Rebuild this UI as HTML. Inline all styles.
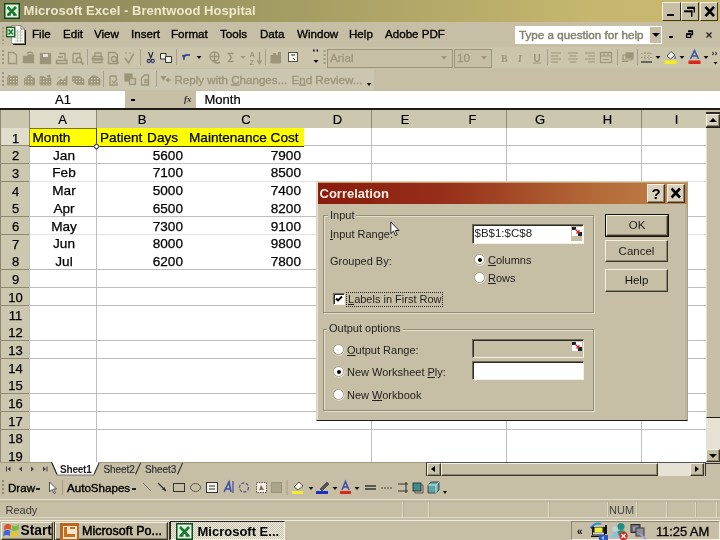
<!DOCTYPE html>
<html>
<head>
<meta charset="utf-8">
<title>Microsoft Excel - Brentwood Hospital</title>
<style>
html,body{margin:0;padding:0;}
html{background:#c7bfa5;}
body{width:720px;height:540px;overflow:hidden;position:relative;filter:blur(0.4px);background:#c7bfa5;font-family:"Liberation Sans",sans-serif;color:#000;}
.abs{position:absolute;}
.t{position:absolute;white-space:nowrap;line-height:1;}
#titlebar{left:0;top:0;width:720px;height:22px;background:linear-gradient(to right,#8a855b 0%,#a59e64 42%,#c6b66e 82%,#c9b96f 100%);}
#title{left:23.5px;top:4px;font-size:13px;font-weight:bold;color:#efe8cc;letter-spacing:0.05px;}
.wbtn{position:absolute;top:1.5px;width:18.5px;height:19px;background:#c7bfa5;border:1px solid;border-color:#f4f0e0 #3a3628 #3a3628 #f4f0e0;box-sizing:border-box;}
#menubar{left:0;top:22px;width:720px;height:24px;background:#c7bfa5;}
.menu{top:28px;font-size:11.6px;-webkit-text-stroke:0.35px #000;}
#tb1{left:0;top:47px;width:720px;height:21px;background:#cbc5ac;}
#tb2{left:0;top:69px;width:373.500px;height:21px;background:#cbc6af;}
#fbar{left:0;top:90px;width:720px;height:18px;background:#c7bfa5;}
#sheet{left:0;top:108px;width:720px;height:354px;background:#fff;overflow:hidden;}
.hl{position:absolute;left:29px;width:677px;height:1px;background:#bebebe;}
.vl{position:absolute;top:20px;width:1px;height:340px;background:#bebebe;}
.rh{position:absolute;left:1px;width:29px;text-align:center;font-size:13px;line-height:1;-webkit-text-stroke:0.25px #000;margin-top:0.5px;}
.ch{position:absolute;top:4.5px;font-size:13px;line-height:1;text-align:center;-webkit-text-stroke:0.2px #000;}
.c{position:absolute;font-size:13.6px;line-height:1;white-space:nowrap;-webkit-text-stroke:0.25px #000;}
.dl{position:absolute;font-size:11px;line-height:1;white-space:nowrap;color:#222;}
.grp{position:absolute;border:1px solid #948e76;box-shadow:1px 1px 0 #e2decb, inset 1px 1px 0 #e2decb;}
.btn{position:absolute;box-sizing:border-box;background:#c7bfa5;border:1px solid;border-color:#f4f0e0 #3a3628 #3a3628 #f4f0e0;box-shadow:inset -1px -1px 0 #8e8872;font-size:11.5px;text-align:center;}
.radio{position:absolute;width:11px;height:11px;border-radius:50%;background:#fff;border:1px solid #a29c86;box-shadow:0.5px 0.5px 0 #f4f0e0;box-sizing:border-box;}
.radio.on::after{content:"";position:absolute;left:2.5px;top:2.5px;width:4px;height:4px;border-radius:50%;background:#000;}
</style>
</head>
<body>

<!-- title bar -->
<div id="titlebar" class="abs"></div>
<svg class="abs" style="left:4px;top:3px" width="16" height="16" viewBox="0 0 16 16">
  <rect x="0.750" y="0.750" width="14.500" height="14.500" fill="#def3da" stroke="#0d4a1c" stroke-width="1.500"/>
  <path d="M3.500 4 L11.500 12 M12 4 L4 12" stroke="#1a7a32" stroke-width="2.600"/>
  <path d="M3 12 H7 M9 12 H13" stroke="#0d4a1c" stroke-width="1.200"/>
</svg>
<div id="title" class="t">Microsoft Excel - Brentwood Hospital</div>
<div class="wbtn" style="left:662px"><div class="abs" style="left:4px;top:11px;width:7px;height:2px;background:#000"></div></div>
<div class="wbtn" style="left:680.5px">
  <svg class="abs" style="left:0;top:0" width="17" height="17" viewBox="0 0 17 17"><path d="M5 4.800 H13" stroke="#000" stroke-width="2.200"/><path d="M12.300 4.800 V9.500" stroke="#000" stroke-width="1.400"/><path d="M2 8.300 H10.500" stroke="#000" stroke-width="2"/><path d="M9.800 8.300 V14" stroke="#000" stroke-width="1.400"/></svg>
</div>
<div class="wbtn" style="left:699.5px">
  <svg class="abs" style="left:0;top:0" width="17" height="17" viewBox="0 0 17 17"><path d="M4.500 3.800 L13 13.200 M13 3.800 L4.500 13.200" stroke="#000" stroke-width="2.600"/></svg>
</div>

<!-- menu bar -->
<div id="menubar" class="abs"></div>

<svg class="abs" style="left:5px;top:24px" width="22" height="22" viewBox="0 0 22 22">
  <path d="M8 3 H17 L21 6.500 V21 H8 Z" fill="#111"/>
  <path d="M6.500 1.500 H16 L19.500 5 V19.500 H6.500 Z" fill="#fbfbf4" stroke="#8a8776" stroke-width="0.800"/>
  <path d="M16 1.500 V5 H19.500" fill="none" stroke="#555" stroke-width="0.800"/>
  <path d="M10 8 H18 M10 11 H18 M10 14 H18 M10 17 H18 M12.500 6 V18 M15.500 6 V18" stroke="#b9cbb8" stroke-width="1"/>
  <rect x="1.750" y="3.250" width="8" height="9.500" fill="#d9f0d6" stroke="#14501f" stroke-width="1.300"/>
  <path d="M3.500 5.500 L8 10.500 M8 5.500 L3.500 10.500" stroke="#1a7a32" stroke-width="1.600"/>
  <path d="M1 3 V14" stroke="#a19a80" stroke-width="1.600" stroke-dasharray="1.500 1.500" transform="translate(-3.500,0)"/>
</svg>
<div class="abs" style="left:1.5px;top:27px;width:2px;height:17px;background:repeating-linear-gradient(to bottom,#a39c82 0 2px,transparent 2px 4px)"></div>
<div class="t menu" style="left:32px">File</div>
<div class="t menu" style="left:63px">Edit</div>
<div class="t menu" style="left:94px">View</div>
<div class="t menu" style="left:131px">Insert</div>
<div class="t menu" style="left:171px">Format</div>
<div class="t menu" style="left:220px">Tools</div>
<div class="t menu" style="left:260px">Data</div>
<div class="t menu" style="left:297px">Window</div>
<div class="t menu" style="left:349px">Help</div>
<div class="t menu" style="left:385px">Adobe PDF</div>
<div class="abs" style="left:515px;top:26px;width:146.500px;height:17.500px;background:#fff;"></div>
<div class="t" style="left:519px;top:29px;font-size:11.6px;color:#85816f;-webkit-text-stroke:0.45px #85816f;letter-spacing:0.03px">Type a question for help</div>
<div class="abs" style="left:650px;top:27px;width:10.500px;height:15.500px;background:#c7bfa5;"></div>
<div class="abs" style="left:651.500px;top:33px;width:0;height:0;border-left:4px solid transparent;border-right:4px solid transparent;border-top:4px solid #000;"></div>
<div class="abs" style="left:669px;top:36px;width:4px;height:2px;background:#000;"></div>
<svg class="abs" style="left:685px;top:30px" width="9" height="9" viewBox="0 0 9 9">
  <path d="M3.500 1.500 H7.500 V4.500 H6" fill="none" stroke="#000" stroke-width="1.300"/><path d="M3 1.200 H8" stroke="#000" stroke-width="1.800"/>
  <rect x="1.600" y="4.200" width="4" height="3.200" fill="none" stroke="#000" stroke-width="1.300"/><path d="M1 4 H6.300" stroke="#000" stroke-width="1.800"/>
</svg>
<svg class="abs" style="left:704px;top:30px" width="10" height="10" viewBox="0 0 10 10"><path d="M2.500 2.500 L7.500 7.500 M7.500 2.500 L2.500 7.500" stroke="#222" stroke-width="1.300"/></svg>
<div id="tb1" class="abs"></div>
<svg class="abs" style="left:0;top:46px" width="720" height="22" viewBox="0 0 720 22">
 <g fill="none" stroke="#9c9579" stroke-width="1.300">
  <path d="M3 4 V18" stroke-dasharray="2 2" stroke-width="2"/>
  <path d="M8.500 6.500 H13.500 L16.500 9 V17.500 H8.500 Z"/>
  <path d="M23.500 16.500 V10.500 H27 L28.500 9 H33.500 V16.500 Z" fill="#9c9579"/><path d="M27 7.500 Q30 5 33 7.500"/>
  <rect x="40.500" y="7.500" width="10" height="10" fill="#9c9579"/><rect x="43" y="8" width="5" height="3" fill="#e4e0cf" stroke="none"/>
  <path d="M59 7.500 H65 V14 M56.500 14.500 H67 V17.500 H56.500 Z M58 11 H63"/>
  <path d="M73 7.500 H80 V13 M73 7.500 V16.500 H77"/><circle cx="79" cy="14" r="2.500"/><path d="M81 16 L83.500 18.500" stroke-width="1.800"/>
  <path d="M87.500 3 V19" stroke-width="1" stroke="#a8a189"/>
  <path d="M93 10.500 H102 V16.500 H93 Z M95 10 V7 H101 V10 M91.500 13 H103.500" /><path d="M94 13.500 H102" stroke-width="2"/>
  <path d="M108.500 6.500 H115 L117.500 9 V17.500 H108.500 Z"/><circle cx="114" cy="13" r="2.500"/><path d="M116 15 L118.500 17.500" stroke-width="1.600"/>
  <path d="M125 12 L128.500 17 L133.500 8" stroke-width="1.600"/><path d="M125 7 h2 m2 0 h2 m2 0 h1" stroke-width="1.200"/>
  <path d="M140.500 3 V19" stroke-width="1" stroke="#a8a189"/>
 </g>
 <g fill="none" stroke="#2b2f6a" stroke-width="1.300">
  <path d="M148.500 6 L151 12.500 M153 6 L150.500 12.500" stroke="#222" stroke-width="1.100"/><circle cx="148.800" cy="15" r="1.600" stroke-width="1.100"/><circle cx="152.700" cy="15" r="1.600" stroke-width="1.100"/>
  <path d="M160.500 7.500 H166 V13 H160.500 Z" fill="#f4f2e8" stroke="#333" stroke-width="1"/><path d="M165.500 10.500 H171.500 V16.500 H165.500 Z" fill="#f4f2e8" stroke="#333" stroke-width="1"/>
 </g>
 <path d="M176.500 3 V19" stroke="#a8a189"/>
 <path d="M184 14 Q183 8 190 9" fill="none" stroke="#3a3f9a" stroke-width="1.600"/><path d="M182 9 L186.500 8.500 L183.500 13 Z" fill="#3a3f9a"/>
 <path d="M196.500 10 h5 l-2.500 3 z" fill="#111"/>
 <g fill="none" stroke="#9c9579" stroke-width="1.300">
  <circle cx="214.500" cy="10.500" r="4.500"/><path d="M210 10.500 H219 M214.500 6 V15"/><path d="M213 14 Q216 19 220 16" stroke-width="1.800"/>
  <path d="M233.500 7.500 H228.500 L231.500 11.500 L228.500 15.500 H233.500"/>
  <path d="M240.500 10 h5 l-2.500 3 z" fill="#9c9579" stroke="none"/>
  <path d="M259.500 6 V17 M257.500 14.500 L259.500 17.500 L261.500 14.500" />
 </g>
 <text x="249.500" y="10.500" font-size="7.500" font-family="Liberation Sans" font-weight="bold" fill="#9c9579">A</text>
 <text x="249.500" y="18.500" font-size="7.500" font-family="Liberation Sans" font-weight="bold" fill="#9c9579">Z</text>
 <path d="M265.500 3 V19" stroke="#a8a189"/>
 <path d="M270.500 17.500 V9 H273 V7 H276 V9 H278 V6 H281 V17.500 Z" fill="#9c9579"/>
 <rect x="288.500" y="6.500" width="9" height="9" fill="#f6f4ea" stroke="#55524a"/><path d="M291 9 h4 M293 12 l2 2" stroke="#333" stroke-width="1"/>
 <path d="M313 4.500 h1.600 M316.500 4.500 h1.600" stroke="#111" stroke-width="2"/><path d="M313.500 14 h5 l-2.500 3 z" fill="#111"/>
 <path d="M324.500 4 V18" stroke="#9c9579" stroke-dasharray="2 2" stroke-width="2"/>
 <rect x="327.500" y="3.500" width="125" height="18" fill="#c7bfa5" stroke="#9c9579"/>
 <path d="M441 10 h6 l-3 3.500 z" fill="#9c9579"/>
 <rect x="454.500" y="3.500" width="37" height="18" fill="#c7bfa5" stroke="#9c9579"/>
 <path d="M481 10 h6 l-3 3.500 z" fill="#9c9579"/>
 <text x="330" y="16" font-size="11.800" font-family="Liberation Sans" fill="#9c9579" stroke="#9c9579" stroke-width="0.300">Arial</text>
 <text x="457" y="16" font-size="11.800" font-family="Liberation Sans" fill="#9c9579" stroke="#9c9579" stroke-width="0.300">10</text>
 <text x="501" y="15.500" font-size="10" font-family="Liberation Serif" font-weight="bold" fill="#9c9579">B</text>
 <text x="518" y="15.500" font-size="10" font-family="Liberation Serif" font-weight="bold" font-style="italic" fill="#9c9579">I</text>
 <text x="533.500" y="15.500" font-size="10" font-family="Liberation Sans" font-weight="bold" fill="#9c9579">U</text>
 <path d="M533 17 h8" stroke="#9c9579"/>
 <path d="M547.500 3 V19 M617.500 3 V19 M637.500 3 V19" stroke="#a8a189"/>
 <g stroke="#9c9579" stroke-width="1.200" fill="none">
  <path d="M551 7 h10 M551 10 h7 M551 13 h10 M551 16 h7"/>
  <path d="M568 7 h10 M569.500 10 h7 M568 13 h10 M569.500 16 h7"/>
  <path d="M585 7 h10 M588 10 h7 M585 13 h10 M588 16 h7"/>
  <rect x="600.500" y="6.500" width="11" height="10"/><path d="M600.500 10 h11 M604 6.500 v3.500 M608 6.500 v3.500 M603 13.500 h6"/>
  <path d="M623 9 h9 v5 h-9 z M622 15.500 h6" /><rect x="626" y="7" width="7" height="5" fill="#9c9579"/>
  <path d="M641 7.500 h11 M641 11.500 h11 M645 6 v8 M649 6 v8" stroke-dasharray="1.500 1.500" stroke-width="1"/>
 </g>
 <path d="M641 16 h11" stroke="#444" stroke-width="1.500"/>
 <path d="M655.500 10 h5 l-2.500 3 z M679.500 10 h5 l-2.500 3 z M703.500 10 h5 l-2.500 3 z" fill="#111"/>
 <path d="M667 10 L671 5.500 L675 9 L670.500 13 Z" fill="#f4f2e6" stroke="#444" stroke-width="0.900"/><path d="M674 9 q2 1 1 4" stroke="#35a" fill="none"/>
 <rect x="664.500" y="14.500" width="12" height="3.500" fill="#f4ee20"/>
 <path d="M690.500 13 L694.500 4.500 L698.500 13 M692 10 H697" stroke="#3b4fa8" stroke-width="1.500" fill="none"/>
 <rect x="688.500" y="14.500" width="12" height="3.500" fill="#dc241c"/>
 <path d="M712 6 l2 1.500 l-2 1.500 M715 6 l2 1.500 l-2 1.500" stroke="#111" fill="none" stroke-width="0.900"/><path d="M713.500 16 h4 l-2 2.500 z" fill="#111"/>
</svg>
<div id="tb2" class="abs"></div>
<svg class="abs" style="left:0;top:68px" width="720" height="22" viewBox="0 0 720 22">
 <path d="M3 4 V18" stroke="#9c9579" stroke-dasharray="2 2" stroke-width="2" fill="none"/>
 <defs><pattern id="spk" width="3" height="3" patternUnits="userSpaceOnUse"><rect width="3" height="3" fill="#9c9579"/><rect x="1" y="1" width="1.300" height="1.300" fill="#d8d3bd"/></pattern></defs>
 <g fill="url(#spk)" stroke="#9c9579" stroke-width="0.800">
  <path d="M7.500 9 l2 -2 l2 2 l1.500 -1 h4.500 v9 h-10 z"/>
  <path d="M24.500 10 h2 l1.500 -2.500 h3 l1 2.500 h2.500 v7 h-10 z"/>
  <path d="M40 8.500 h4 l2 2 h5 v6.500 h-11 z"/><path d="M47 8 l3 -1 v3 z" fill="#9c9579"/>
  <path d="M57 17 v-2 l4 -4 l2 2 l4 -5 v9 z"/><path d="M57.500 9 h3" />
  <path d="M72.500 8.500 h7 l4.500 3 v5 h-7 l-4.500 -3 z"/>
  <path d="M88.500 11.500 l3.500 -3.500 h4 l4 3 v6 h-11.500 z"/>
 </g>
 <path d="M103.500 3 V19 M156.500 3 V19" stroke="#a8a189"/>
 <g fill="none" stroke="#9c9579" stroke-width="1.300">
  <path d="M110 8 h6 v3 M110 8 v9 h7 v-3 M112 13 l2 2 l3 -4"/>
  <rect x="125" y="6" width="7" height="7" fill="#9c9579"/><rect x="129.500" y="10.500" width="6" height="6" fill="#c7bfa5"/>
  <path d="M141.500 17 v-7 l3 -3 h4 v10 z M144 12 h5 M144 14.500 h5"/>
 </g>
 <path d="M160.500 8 h6 l-3 5 z" fill="#9c9579"/><path d="M166 12 l2.500 -2 v4 z M168 12 h3" fill="#9c9579" stroke="#9c9579"/>
 <text x="174.500" y="15.500" font-size="11.600" font-family="Liberation Sans" fill="#9c9579" stroke="#9c9579" stroke-width="0.350">Reply with <tspan text-decoration="underline">C</tspan>hanges...</text>
 <text x="291.500" y="15.500" font-size="11.600" font-family="Liberation Sans" fill="#9c9579" stroke="#9c9579" stroke-width="0.350">E<tspan text-decoration="underline">n</tspan>d Review...</text>
 <path d="M366.500 15 h5 l-2.500 3 z" fill="#111"/>
</svg>
<div id="fbar" class="abs"></div>
<div class="abs" style="left:0;top:91px;width:125px;height:17px;background:#fff"></div>
<div class="t" style="left:55px;top:92.5px;font-size:13px;-webkit-text-stroke:0.2px #000">A1</div>
<div class="abs" style="left:131px;top:99px;width:4px;height:2px;background:#000"></div>
<div class="t" style="left:184px;top:95px;font-size:9px;font-style:italic;font-weight:bold;color:#333;font-family:'Liberation Serif',serif">fx</div>
<div class="abs" style="left:196px;top:91px;width:524px;height:17px;background:#fff"></div>
<div class="t" style="left:204.5px;top:92.5px;font-size:13px;-webkit-text-stroke:0.2px #000">Month</div>

<div id="sheet" class="abs">
<div class="abs" style="left:0;top:0.400px;width:720px;height:1.500px;background:#1e1c16"></div>
<div class="abs" style="left:0;top:2px;width:706px;height:18px;background:#ccc7af"></div>
<div class="abs" style="left:0;top:2px;width:29px;height:360px;background:#ccc7af"></div>
<div class="abs" style="left:30px;top:2px;width:66px;height:18px;background:#e0ddcc"></div>
<div class="abs" style="left:0;top:20px;width:29px;height:18px;background:#e0ddcc"></div>
<div class="vl" style="left:29px"></div>
<div class="vl" style="left:96px"></div>
<div class="vl" style="left:371px"></div>
<div class="vl" style="left:506px"></div>
<div class="vl" style="left:641px"></div>
<div class="vl" style="left:706px"></div>
<div class="abs" style="left:29px;top:2px;width:1px;height:18px;background:#8e8872"></div>
<div class="abs" style="left:96px;top:2px;width:1px;height:18px;background:#8e8872"></div>
<div class="abs" style="left:371px;top:2px;width:1px;height:18px;background:#8e8872"></div>
<div class="abs" style="left:506px;top:2px;width:1px;height:18px;background:#8e8872"></div>
<div class="abs" style="left:641px;top:2px;width:1px;height:18px;background:#8e8872"></div>
<div class="ch" style="left:29px;width:67px">A</div>
<div class="ch" style="left:96px;width:92px">B</div>
<div class="ch" style="left:188px;width:116px">C</div>
<div class="ch" style="left:304px;width:67px">D</div>
<div class="ch" style="left:371px;width:68px">E</div>
<div class="ch" style="left:439px;width:67px">F</div>
<div class="ch" style="left:506px;width:68px">G</div>
<div class="ch" style="left:574px;width:67px">H</div>
<div class="ch" style="left:644px;width:65px">I</div>
<div class="hl" style="top:37.4px"></div>
<div class="abs" style="left:0;top:37.4px;width:29px;height:1px;background:#8e8872"></div>
<div class="rh" style="top:23.0px">1</div>
<div class="hl" style="top:55.1px"></div>
<div class="abs" style="left:0;top:55.1px;width:29px;height:1px;background:#8e8872"></div>
<div class="rh" style="top:40.7px">2</div>
<div class="hl" style="top:72.8px;opacity:0.45"></div>
<div class="abs" style="left:0;top:72.8px;width:29px;height:1px;background:#8e8872"></div>
<div class="rh" style="top:58.4px">3</div>
<div class="rh" style="top:76.1px">4</div>
<div class="hl" style="top:108.2px"></div>
<div class="abs" style="left:0;top:108.2px;width:29px;height:1px;background:#8e8872"></div>
<div class="rh" style="top:93.8px">5</div>
<div class="hl" style="top:125.9px;opacity:0.45"></div>
<div class="abs" style="left:0;top:125.9px;width:29px;height:1px;background:#8e8872"></div>
<div class="rh" style="top:111.5px">6</div>
<div class="rh" style="top:129.2px">7</div>
<div class="hl" style="top:161.3px"></div>
<div class="abs" style="left:0;top:161.3px;width:29px;height:1px;background:#8e8872"></div>
<div class="rh" style="top:146.9px">8</div>
<div class="hl" style="top:179.0px"></div>
<div class="abs" style="left:0;top:179.0px;width:29px;height:1px;background:#8e8872"></div>
<div class="rh" style="top:164.6px">9</div>
<div class="hl" style="top:196.7px"></div>
<div class="abs" style="left:0;top:196.7px;width:29px;height:1px;background:#8e8872"></div>
<div class="rh" style="top:182.3px">10</div>
<div class="rh" style="top:200.0px">11</div>
<div class="hl" style="top:232.1px"></div>
<div class="abs" style="left:0;top:232.1px;width:29px;height:1px;background:#8e8872"></div>
<div class="rh" style="top:217.7px">12</div>
<div class="hl" style="top:249.8px"></div>
<div class="abs" style="left:0;top:249.8px;width:29px;height:1px;background:#8e8872"></div>
<div class="rh" style="top:235.4px">13</div>
<div class="rh" style="top:253.1px">14</div>
<div class="hl" style="top:285.2px"></div>
<div class="abs" style="left:0;top:285.2px;width:29px;height:1px;background:#8e8872"></div>
<div class="rh" style="top:270.8px">15</div>
<div class="hl" style="top:302.9px"></div>
<div class="abs" style="left:0;top:302.9px;width:29px;height:1px;background:#8e8872"></div>
<div class="rh" style="top:288.5px">16</div>
<div class="hl" style="top:320.6px"></div>
<div class="abs" style="left:0;top:320.6px;width:29px;height:1px;background:#8e8872"></div>
<div class="rh" style="top:306.2px">17</div>
<div class="rh" style="top:323.9px">18</div>
<div class="hl" style="top:356.0px"></div>
<div class="abs" style="left:0;top:356.0px;width:29px;height:1px;background:#8e8872"></div>
<div class="rh" style="top:341.6px">19</div>
<div class="abs" style="left:30px;top:20px;width:274px;height:18px;background:#ffff00"></div>
<div class="abs" style="left:96px;top:37.700px;width:208px;height:1px;background:#3a3a20"></div>
<div class="abs" style="left:29px;top:20px;width:68px;height:18.500px;border:1px solid #3a3a20;border-top-color:#77752a;border-left-color:#8c8a4a;box-sizing:border-box"></div>
<div class="abs" style="left:94px;top:36px;width:3px;height:3px;background:#fff;border:1px solid #333;box-sizing:content-box;transform:rotate(45deg)"></div>
<div class="c" style="left:32.500px;top:23.2px">Month</div>
<div class="c" style="left:100px;top:23.2px;word-spacing:1px">Patient Days</div>
<div class="c" style="left:189px;top:23.2px">Maintenance Cost</div>
<div class="c" style="left:31px;width:66px;text-align:center;top:40.7px">Jan</div>
<div class="c" style="left:96px;width:87px;text-align:right;top:40.7px">5600</div>
<div class="c" style="left:188px;width:113px;text-align:right;top:40.7px">7900</div>
<div class="c" style="left:31px;width:66px;text-align:center;top:58.4px">Feb</div>
<div class="c" style="left:96px;width:87px;text-align:right;top:58.4px">7100</div>
<div class="c" style="left:188px;width:113px;text-align:right;top:58.4px">8500</div>
<div class="c" style="left:31px;width:66px;text-align:center;top:76.1px">Mar</div>
<div class="c" style="left:96px;width:87px;text-align:right;top:76.1px">5000</div>
<div class="c" style="left:188px;width:113px;text-align:right;top:76.1px">7400</div>
<div class="c" style="left:31px;width:66px;text-align:center;top:93.8px">Apr</div>
<div class="c" style="left:96px;width:87px;text-align:right;top:93.8px">6500</div>
<div class="c" style="left:188px;width:113px;text-align:right;top:93.8px">8200</div>
<div class="c" style="left:31px;width:66px;text-align:center;top:111.5px">May</div>
<div class="c" style="left:96px;width:87px;text-align:right;top:111.5px">7300</div>
<div class="c" style="left:188px;width:113px;text-align:right;top:111.5px">9100</div>
<div class="c" style="left:31px;width:66px;text-align:center;top:129.2px">Jun</div>
<div class="c" style="left:96px;width:87px;text-align:right;top:129.2px">8000</div>
<div class="c" style="left:188px;width:113px;text-align:right;top:129.2px">9800</div>
<div class="c" style="left:31px;width:66px;text-align:center;top:146.9px">Jul</div>
<div class="c" style="left:96px;width:87px;text-align:right;top:146.9px">6200</div>
<div class="c" style="left:188px;width:113px;text-align:right;top:146.9px">7800</div>
<div class="abs" style="left:706px;top:2px;width:14px;height:352px;background:#c7bfa5"></div>
<div class="abs" style="left:706px;top:4px;width:14px;height:1.5px;background:#2e2c24"></div>
<div class="btn" style="left:706px;top:5.5px;width:13.500px;height:13.5px;background:#d6d1bd"></div>
<div class="abs" style="left:706px;top:19px;width:13.500px;height:1.200px;background:#1e1c16;z-index:2"></div>
<div class="abs" style="left:706px;top:19px;width:14px;height:322px;background:#e4e2d5"></div>
<div class="abs" style="left:706px;top:19px;width:14px;height:291px;background:#c7bfa5;border-bottom:1.5px solid #1e1c16;border-left:1px solid #e6e2d0;box-sizing:border-box"></div>
<div class="abs" style="left:709px;top:10px;width:0;height:0;border-left:4px solid transparent;border-right:4px solid transparent;border-bottom:4px solid #000"></div>
</div>



<div class="abs" style="left:0;top:110px;width:1px;height:352px;background:#8e8872"></div>
<!-- dialog -->
<div class="abs" style="left:316px;top:181px;width:372px;height:240px;box-sizing:border-box;background:#c7bfa5;border:1px solid;border-color:#d9d4be #a8a088 #1e1c16 #d9d4be;box-shadow:inset 1px 1px 0 #e6e2d0, inset -2px 0 0 #bcb496"></div>
<div class="abs" style="left:318px;top:182px;width:369px;height:21.5px;background:linear-gradient(to right,#8a1a0e 0%,#96301a 35%,#b46a38 75%,#c08248 100%);border-top:1px solid #c9a070;box-sizing:border-box"></div>
<div class="t" style="left:319.5px;top:186.5px;font-size:13px;font-weight:bold;color:#f6efe0">Correlation</div>
<div class="btn" style="left:647px;top:184px;width:18px;height:19px;background:#d8d2be"></div>
<div class="t" style="left:651.5px;top:186px;font-size:15px;font-weight:bold">?</div>
<div class="btn" style="left:667px;top:184px;width:18px;height:19px;background:#d8d2be"></div>
<svg class="abs" style="left:667px;top:184px" width="18" height="19" viewBox="0 0 18 19"><path d="M4.500 4.500 L13 13.500 M13 4.500 L4.500 13.500" stroke="#000" stroke-width="2.600"/></svg>

<div class="grp" style="left:323px;top:215px;width:269px;height:96px"></div>
<div class="dl" style="left:328px;top:210px;background:#c7bfa5;padding:0 2px">Input</div>
<div class="dl" style="left:330px;top:229px"><u>I</u>nput Range:</div>
<div class="abs" style="left:472px;top:223.5px;width:112px;height:20px;box-sizing:border-box;background:#fff;border:1px solid;border-color:#6e6a58 #f4f0e0 #f4f0e0 #6e6a58;box-shadow:inset 1px 1px 0 #2e2c24"></div>
<div class="dl" style="left:474.5px;top:228px;font-size:11.5px">$B$1:$C$8</div>
<div class="abs" style="left:571px;top:226px;width:11px;height:15px;background:#c7bfa5"></div>
<svg class="abs" style="left:572px;top:227px" width="10" height="10" viewBox="0 0 10 10"><rect x="0" y="0" width="10" height="9" fill="#fff"/><rect x="0" y="0" width="4" height="3" fill="#123"/><rect x="6" y="5" width="4" height="4" fill="#123"/><path d="M3 2 L7 6 M7 3 V6 H4" stroke="#c22" stroke-width="1.200" fill="none"/></svg>

<div class="dl" style="left:330px;top:256px">Grouped By:</div>
<div class="radio on" style="left:474px;top:254px"></div>
<div class="dl" style="left:488px;top:255px"><u>C</u>olumns</div>
<div class="radio" style="left:474px;top:272px"></div>
<div class="dl" style="left:488px;top:273px"><u>R</u>ows</div>

<div class="abs" style="left:333px;top:293px;width:12px;height:12px;box-sizing:border-box;background:#fff;border:1px solid;border-color:#6e6a58 #f4f0e0 #f4f0e0 #6e6a58;box-shadow:inset 1px 1px 0 #2e2c24"></div>
<svg class="abs" style="left:335px;top:295px" width="8" height="8" viewBox="0 0 8 8"><path d="M1 3.500 L3 5.500 L7 1.500" stroke="#000" stroke-width="1.800" fill="none"/></svg>
<div class="abs" style="left:346px;top:292px;width:97px;height:15px;box-sizing:border-box;border:1px dotted #222"></div>
<div class="dl" style="left:348px;top:294px"><u>L</u>abels in First Row</div>

<div class="grp" style="left:323px;top:329px;width:269px;height:80px"></div>
<div class="dl" style="left:327px;top:323px;background:#c7bfa5;padding:0 2px">Output options</div>
<div class="radio" style="left:333px;top:344px"></div>
<div class="dl" style="left:347px;top:345px"><u>O</u>utput Range:</div>
<div class="radio on" style="left:333px;top:366px"></div>
<div class="dl" style="left:347px;top:367px">New Worksheet <u>P</u>ly:</div>
<div class="radio" style="left:333px;top:389px"></div>
<div class="dl" style="left:347px;top:390px">New <u>W</u>orkbook</div>
<div class="abs" style="left:472px;top:339px;width:112px;height:19px;box-sizing:border-box;background:#c7bfa5;border:1px solid;border-color:#6e6a58 #f4f0e0 #f4f0e0 #6e6a58;box-shadow:inset 1px 1px 0 #2e2c24"></div>
<svg class="abs" style="left:572px;top:342px" width="10" height="10" viewBox="0 0 10 10"><rect x="0" y="0" width="10" height="9" fill="#fff"/><rect x="0" y="0" width="4" height="3" fill="#123"/><rect x="6" y="5" width="4" height="4" fill="#123"/><path d="M3 2 L7 6 M7 3 V6 H4" stroke="#c22" stroke-width="1.200" fill="none"/></svg>
<div class="abs" style="left:472px;top:361px;width:112px;height:19px;box-sizing:border-box;background:#fff;border:1px solid;border-color:#6e6a58 #f4f0e0 #f4f0e0 #6e6a58;box-shadow:inset 1px 1px 0 #2e2c24"></div>

<div class="abs" style="left:605px;top:214px;width:64px;height:23px;box-sizing:border-box;border:1px solid #111"></div>
<div class="btn" style="left:606px;top:215px;width:62px;height:21px;line-height:19px;color:#222">OK</div>
<div class="btn" style="left:605px;top:240px;width:63px;height:22px;line-height:20px;color:#222">Cancel</div>
<div class="btn" style="left:605px;top:269px;width:63px;height:23px;line-height:21px;color:#111">Help</div>

<svg class="abs" style="left:390.300px;top:221.200px" width="10" height="16" viewBox="0 0 12 19"><path d="M1 1 V15 L4.200 12 L6.500 17.500 L8.600 16.600 L6.300 11.300 H10.800 Z" fill="#fff" stroke="#000" stroke-width="1"/></svg>

<!-- tab strip + h scrollbar -->
<div class="abs" style="left:0;top:462px;width:720px;height:14px;background:#c7bfa5"></div>
<svg class="abs" style="left:0;top:462px" width="430" height="15" viewBox="0 0 430 15">
  <path d="M51 0 L57 13 H93 L99 0 Z" fill="#fff"/>
  <path d="M51.500 0 L57 12.500" fill="none" stroke="#222" stroke-width="1.200"/>
  <path d="M99.500 0 L94 12.500 M141 0 L135.500 12.500 M183 0 L177.500 12.500" fill="none" stroke="#333" stroke-width="1.100"/>
  <path d="M57 13 H94" stroke="#555" stroke-width="0.800"/>
  <path d="M0 0.500 H51 M99 0.500 H426" stroke="#a29b82" stroke-width="1"/>
  <g fill="#444">
   <path d="M6 4.500 V9.500 H7 V4.500 Z M10.500 4.500 L7.500 7 L10.500 9.500 Z"/>
   <path d="M22 4.500 L19 7 L22 9.500 Z"/>
   <path d="M31 4.500 L34 7 L31 9.500 Z"/>
   <path d="M43 4.500 L46 7 L43 9.500 Z M46.500 4.500 V9.500 H47.500 V4.500 Z"/>
  </g>
</svg>
<div class="t" style="left:60px;top:464.5px;font-size:10px;font-weight:bold;color:#222;letter-spacing:-0.2px">Sheet1</div>
<div class="t" style="left:103.500px;top:464.5px;font-size:10px;color:#333;-webkit-text-stroke:0.2px #333;letter-spacing:-0.1px">Sheet2</div>
<div class="t" style="left:145px;top:464.5px;font-size:10px;color:#333;-webkit-text-stroke:0.2px #333;letter-spacing:-0.1px">Sheet3</div>
<div class="abs" style="left:426px;top:462px;width:280px;height:14px;background:#c7bfa5;border-top:1px solid #555;box-sizing:border-box"></div>
<div class="abs" style="left:426px;top:463px;width:1px;height:13px;background:#3a3628"></div>
<div class="btn" style="left:427px;top:463px;width:14px;height:13px"></div>
<div class="abs" style="left:431px;top:466px;width:0;height:0;border-top:3.5px solid transparent;border-bottom:3.5px solid transparent;border-right:4px solid #000"></div>
<div class="btn" style="left:441px;top:463px;width:217px;height:13px"></div>
<div class="abs" style="left:658px;top:463px;width:32px;height:13px;background:#e6e3d6"></div>
<div class="btn" style="left:690px;top:463px;width:14px;height:13px"></div>
<div class="abs" style="left:695px;top:466px;width:0;height:0;border-top:3.5px solid transparent;border-bottom:3.5px solid transparent;border-left:4px solid #000"></div>
<div class="abs" style="left:706px;top:462px;width:14px;height:14px;background:#c7bfa5"></div>
<div class="abs" style="left:705px;top:463px;width:15px;height:1px;background:#333"></div>
<div class="abs" style="left:705px;top:463px;width:1px;height:13px;background:#333"></div>
<!-- v scrollbar bottom -->
<div class="btn" style="left:706px;top:449px;width:14px;height:13px"></div>
<div class="abs" style="left:709px;top:454px;width:0;height:0;border-left:4px solid transparent;border-right:4px solid transparent;border-top:4px solid #000"></div>

<!-- drawing toolbar -->
<div class="abs" style="left:0;top:476px;width:720px;height:23px;background:#c7bfa5"></div>
<div class="abs" style="left:2px;top:480px;width:2px;height:15px;background:repeating-linear-gradient(to bottom,#8e8872 0 2px,transparent 2px 4px)"></div>
<div class="t menu" style="left:8px;top:482px">Draw</div>
<div class="abs" style="left:36px;top:488px;width:4px;height:1.5px;background:#222"></div>
<svg class="abs" style="left:48px;top:481px" width="10" height="14" viewBox="0 0 10 14"><path d="M1.5 1 V11 L4 8.5 L6 12.5 L7.5 12 L5.5 8 H8.5 Z" fill="#fff" stroke="#444" stroke-width="0.9"/></svg>
<div class="abs" style="left:62px;top:480px;width:1px;height:15px;background:#a39c84"></div>
<div class="t menu" style="left:67px;top:482px">AutoShapes</div>
<div class="abs" style="left:132px;top:488px;width:4px;height:1.5px;background:#222"></div>
<svg class="abs" style="left:140px;top:478px" width="300" height="20" viewBox="0 0 300 20">
  <path d="M3 5 L11 13" stroke="#777" stroke-width="1"/>
  <path d="M18 5 L26 13" stroke="#333" stroke-width="1.2"/><path d="M26 13 L22 11.5 L24.5 9 Z" fill="#333"/>
  <rect x="33.5" y="5.500" width="11" height="8" fill="none" stroke="#333"/>
  <ellipse cx="55.500" cy="9.500" rx="5" ry="4" fill="none" stroke="#555"/>
  <rect x="66.500" y="4.500" width="11" height="10" fill="#f4f2e8" stroke="#333"/><path d="M69 8 H75 M69 11 H75" stroke="#333"/>
  <path d="M84 14 L89 4 L91 14 M86 11 H90" stroke="#3b4fa8" stroke-width="1.6" fill="none"/><path d="M93 3 V15" stroke="#3b4fa8" stroke-width="1.2"/>
  <circle cx="104" cy="9.500" r="4.500" fill="none" stroke="#6a5a8a" stroke-width="1.4" stroke-dasharray="3 1.500"/>
  <rect x="116.500" y="4.500" width="10" height="10" fill="#f0eee2" stroke="#555" stroke-dasharray="1.500 1"/><path d="M119 12 L121 7 L124 12 Z" fill="#8a6a5a"/>
  <rect x="131.500" y="4.500" width="10" height="10" fill="#aaa488" stroke="#9a947a"/>
  <path d="M147 2 V17" stroke="#a39c84"/>
  <path d="M154 9 L159 4 L163 8 L158 12 Z" fill="#f8f6ea" stroke="#444" stroke-width="0.9"/><rect x="152" y="13" width="11" height="3" fill="#f2ee2a"/>
  <path d="M168 9 l3.500 4 l3.500 -4 z" fill="#111" transform="translate(0,0) scale(1)" style="display:none"/>
  <path d="M168.500 9 h5 l-2.500 3 z" fill="#111"/>
  <path d="M180 11 L187 4 L189 6 L182 13 Z" fill="#555" stroke="#333" stroke-width="0.6"/><rect x="176" y="13" width="12" height="3" fill="#1d2fc4"/>
  <path d="M192.500 9 h5 l-2.500 3 z" fill="#111"/>
  <path d="M202 12 L205.500 3.500 L209 12 M203.500 9 H207.500" stroke="#3b4fa8" stroke-width="1.500" fill="none"/><rect x="200" y="13" width="11" height="3" fill="#d8281e"/>
  <path d="M214.500 9 h5 l-2.500 3 z" fill="#111"/>
  <path d="M225 8 H236 M225 11 H236" stroke="#333" stroke-width="1.400"/>
  <path d="M241 10 H252" stroke="#444" stroke-width="1.200" stroke-dasharray="2 1"/>
  <path d="M258 6 H268 M258 13 H268 M266 4 V15" stroke="#333" stroke-width="1.100" fill="none"/>
  <rect x="273" y="5" width="8" height="8" fill="#3d8f8f" stroke="#222" stroke-width="0.800"/><path d="M275 13 V15 H283 V7 H281" fill="none" stroke="#555" />
  <path d="M288 7 L291 4 H299 V12 L296 15 H288 Z" fill="#5fa3a3" stroke="#333" stroke-width="0.800"/><path d="M288 7 H296 V15 M296 7 L299 4" fill="none" stroke="#dff" stroke-width="0.800"/>
</svg>
<div class="abs" style="left:443px;top:491px;width:0;height:0;border-left:2.5px solid transparent;border-right:2.5px solid transparent;border-top:3px solid #111"></div>

<!-- status bar -->
<div class="abs" style="left:0;top:499px;width:720px;height:21px;background:#c7bfa5"></div>
<div class="t" style="left:5.500px;top:505px;font-size:11px;color:#3c3a34">Ready</div>
<div class="t" style="left:609px;top:505px;font-size:11px;color:#444">NUM</div>
<div class="abs" style="left:0;top:499px;width:720px;height:1px;background:#e4e0cf"></div>
<div class="abs" style="left:402px;top:501px;width:1px;height:16px;background:#ddd8c5"></div><div class="abs" style="left:403px;top:501px;width:1px;height:16px;background:#b9b195"></div>
<div class="abs" style="left:428px;top:501px;width:1px;height:16px;background:#ddd8c5"></div><div class="abs" style="left:429px;top:501px;width:1px;height:16px;background:#b9b195"></div>
<div class="abs" style="left:548px;top:501px;width:1px;height:16px;background:#ddd8c5"></div><div class="abs" style="left:549px;top:501px;width:1px;height:16px;background:#b9b195"></div>
<div class="abs" style="left:607px;top:501px;width:1px;height:16px;background:#ddd8c5"></div><div class="abs" style="left:608px;top:501px;width:1px;height:16px;background:#b9b195"></div>
<div class="abs" style="left:636px;top:501px;width:1px;height:16px;background:#ddd8c5"></div><div class="abs" style="left:637px;top:501px;width:1px;height:16px;background:#b9b195"></div>
<div class="abs" style="left:666px;top:501px;width:1px;height:16px;background:#ddd8c5"></div><div class="abs" style="left:667px;top:501px;width:1px;height:16px;background:#b9b195"></div>
<div class="abs" style="left:695px;top:501px;width:1px;height:16px;background:#ddd8c5"></div><div class="abs" style="left:696px;top:501px;width:1px;height:16px;background:#b9b195"></div>
<div class="abs" style="left:716px;top:501px;width:1px;height:16px;background:#ddd8c5"></div><div class="abs" style="left:717px;top:501px;width:1px;height:16px;background:#b9b195"></div>
<div class="abs" style="left:0;top:517px;width:720px;height:1px;background:#dcd7c4"></div>
<div class="abs" style="left:0;top:500.500px;width:720px;height:1px;background:#bab296"></div>

<!-- taskbar -->
<div class="abs" style="left:0;top:520px;width:720px;height:20px;background:#c7bfa5"></div>
<div class="abs" style="left:0;top:520px;width:720px;height:1px;background:#efecdf"></div>
<div class="btn" style="left:1px;top:522px;width:52px;height:18px"></div>
<svg class="abs" style="left:3px;top:523px" width="17" height="15" viewBox="0 0 17 15">
  <path d="M1.500 2.500 Q4.500 0 8 2 L7.500 7 Q4.500 5 1 7.500 Z" fill="#e2502c"/>
  <path d="M9 2.300 Q12 4.500 16 1.500 L15.500 6.500 Q12 9 8.500 7.200 Z" fill="#6fbf3a"/>
  <path d="M0.800 8.500 Q4 6 7.300 8 L6.800 13 Q3.500 11 0.300 13.500 Z" fill="#3b68d8"/>
  <path d="M8.300 8.300 Q11.500 10.300 15.300 7.500 L14.800 12.500 Q11.500 15 7.800 13.300 Z" fill="#e8c428"/>
</svg>
<div class="t" style="left:20.500px;top:523.700px;font-size:13.8px;font-weight:bold">Start</div>
<div class="btn" style="left:55px;top:522px;width:113px;height:18px"></div>
<div class="abs" style="left:60px;top:523px;width:19px;height:17px;background:#b9651f;"></div>
<div class="abs" style="left:62.500px;top:525.500px;width:14px;height:13px;background:#f7e6cc"></div>
<div class="abs" style="left:64px;top:527px;width:11px;height:10px;background:#c66f22"></div>
<div class="abs" style="left:66.500px;top:527px;width:8.500px;height:6.500px;background:#f7e6cc"></div>
<div class="abs" style="left:70px;top:527px;width:5px;height:2px;background:#c66f22"></div>
<div class="t" style="left:82px;top:525px;font-size:12.5px;-webkit-text-stroke:0.5px #000">Microsoft Po...</div>
<div class="abs" style="left:170px;top:521px;width:115px;height:19px;box-sizing:border-box;border:1px solid;border-color:#222 #f4f0e0 #f4f0e0 #222;background:#e2dfd0;background-image:repeating-conic-gradient(#c7bfa5 0% 25%, #f1efe6 0% 50%);background-size:2px 2px"></div>
<svg class="abs" style="left:176px;top:523px" width="17" height="17" viewBox="0 0 17 17">
  <rect x="0.750" y="0.750" width="15.500" height="15.500" fill="#def3da" stroke="#0d4a1c" stroke-width="1.500"/>
  <path d="M4 4 L12.500 13 M13 4 L4.500 13" stroke="#1a7a32" stroke-width="2.600"/>
  <path d="M3 13 H7.500 M9.500 13 H14" stroke="#0d4a1c" stroke-width="1.200"/>
</svg>
<div class="t" style="left:197.500px;top:524.800px;font-size:13px;font-weight:bold">Microsoft E...</div>
<div class="abs" style="left:54px;top:522px;width:1px;height:18px;background:#3a3628"></div>
<div class="abs" style="left:168.500px;top:522px;width:1px;height:18px;background:#3a3628"></div>
<!-- tray -->
<div class="abs" style="left:571px;top:521px;width:149px;height:19px;box-sizing:border-box;border:1px solid;border-color:#8e8872 #f4f0e0 #f4f0e0 #8e8872"></div>
<div class="t" style="left:577px;top:527px;font-size:10px;font-weight:bold;letter-spacing:-1px">«</div>
<svg class="abs" style="left:590px;top:522px" width="60" height="18" viewBox="0 0 60 18">
  <path d="M1 6 Q5 0 11 2" stroke="#2a8fd8" stroke-width="2" fill="none"/><path d="M0 5 L4 4 L2.500 8 Z" fill="#1a3fb0"/>
  <rect x="2" y="5" width="13" height="8" fill="#1b1b1b"/><rect x="4.500" y="5.500" width="8" height="5" fill="#f2ee3a"/><rect x="3" y="10.500" width="11" height="2" fill="#d8d8c8"/>
  <rect x="15" y="3" width="2" height="9" fill="#111"/>
  <rect x="1" y="13.500" width="14" height="1.500" fill="#111"/>
  <path d="M9 13 H18 V18 H9 Z" fill="#2a55c8"/><path d="M11 16 l3 -2 v4 z" fill="#9cc4f0"/>
  <circle cx="31" cy="4.500" r="3.600" fill="#1f8f86"/><path d="M26.500 14 Q26.500 8 31.500 8 Q36 8 36 13 Z" fill="#2a9a7a"/>
  <circle cx="25" cy="7" r="2.800" fill="#b9d4e8"/><path d="M21 16 Q21 10 25 10 Q29 10 29 16 Z" fill="#8fc0e0"/>
  <circle cx="33.500" cy="14" r="4.200" fill="#d8261c"/><path d="M31.500 12 l4 4 m0 -4 l-4 4" stroke="#fff" stroke-width="1.400"/>
  <rect x="41" y="2.500" width="9" height="8" fill="#6f6f74" stroke="#2a2a2e"/><rect x="43" y="4.500" width="5" height="4" fill="#9a9aa4"/>
  <rect x="46" y="6" width="8" height="8" fill="#8e8e9a" stroke="#3a3a44"/>
  <path d="M50 12 l6 5" stroke="#a99ad8" stroke-width="2"/>
</svg>
<div class="t" style="left:656px;top:524.5px;font-size:13px;letter-spacing:-0.1px;-webkit-text-stroke:0.3px #000">11:25 AM</div>
</body>
</html>
